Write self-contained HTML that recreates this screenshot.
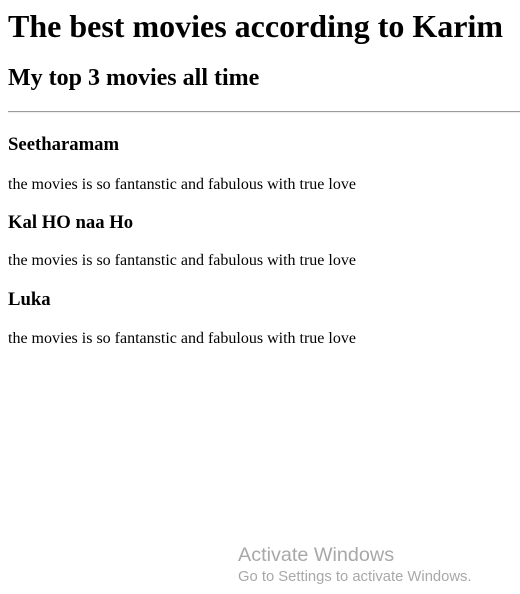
<!DOCTYPE html>
<html><head><meta charset="utf-8"><style>
html,body{margin:0;padding:0;background:#fff;width:520px;height:594px;overflow:hidden;position:relative}
.t{position:absolute;left:8px;font-family:"Liberation Serif",serif;color:#000;white-space:nowrap;margin:0}
.b{font-weight:bold}
hr{position:absolute;left:8px;top:111px;width:512px;margin:0;border:0;border-top:1px solid #9a9a9a;border-bottom:1px solid #eee;height:0}
.w{position:absolute;font-family:"Liberation Sans",sans-serif;color:#a8a8a8;white-space:nowrap}
</style></head><body>
<div class="t b" style="top:8px;font-size:32px;line-height:37px">The best movies according to Karim</div>
<div class="t b" style="top:64px;font-size:24px;line-height:28px">My top 3 movies all time</div>
<hr>
<div class="t b" style="top:134px;font-size:18.7px;line-height:21px">Seetharamam</div>
<div class="t" style="top:176px;font-size:16px;line-height:18px">the movies is so fantanstic and fabulous with true love</div>
<div class="t b" style="top:212px;font-size:18.7px;line-height:21px">Kal HO naa Ho</div>
<div class="t" style="top:252px;font-size:16px;line-height:18px">the movies is so fantanstic and fabulous with true love</div>
<div class="t b" style="top:289px;font-size:18.7px;line-height:21px">Luka</div>
<div class="t" style="top:330px;font-size:16px;line-height:18px">the movies is so fantanstic and fabulous with true love</div>
<div class="w" style="left:238px;top:543px;font-size:19.8px;line-height:24px">Activate Windows</div>
<div class="w" style="left:238px;top:569px;font-size:14.8px;line-height:17px">Go to Settings to activate Windows.</div>
</body></html>
